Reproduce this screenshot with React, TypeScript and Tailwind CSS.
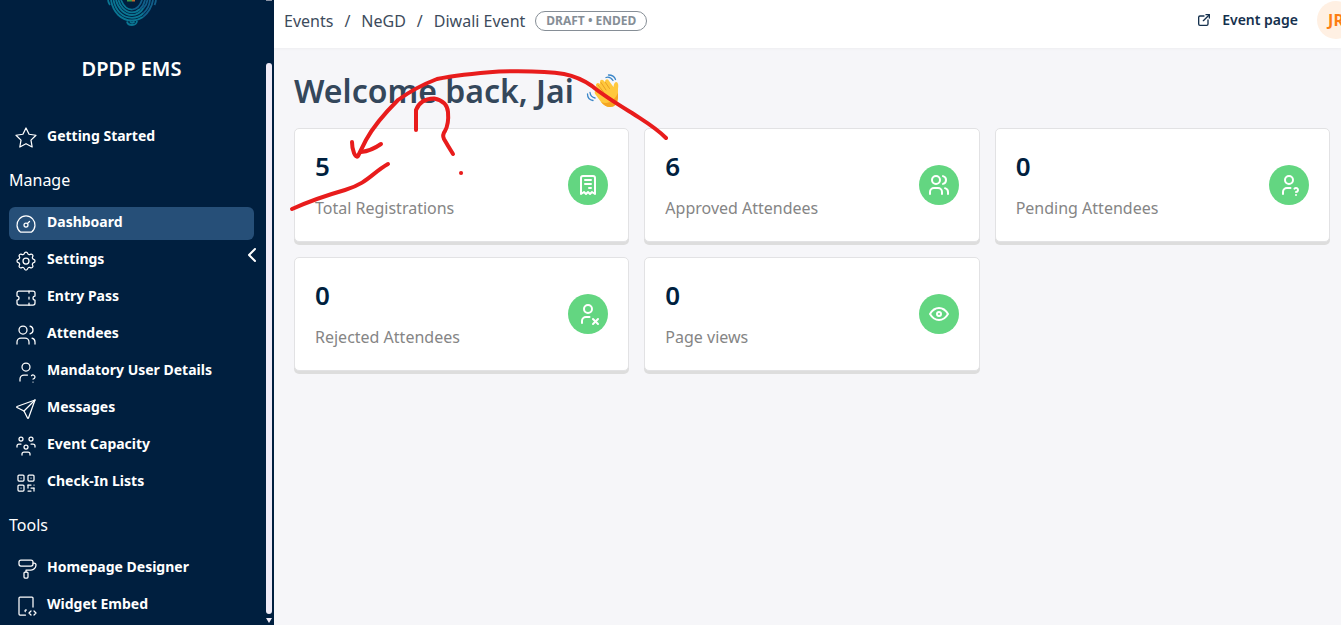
import React from 'react';
import type { IconType } from 'react-icons';
import {
    TbChevronLeft,
    TbDashboard,
    TbDeviceTabletCode,
    TbExternalLink,
    TbEye,
    TbPaint,
    TbQrcode,
    TbReceipt,
    TbSend,
    TbSettings,
    TbStar,
    TbTicket,
    TbUserQuestion,
    TbUsers,
    TbUsersGroup,
    TbUserX,
} from 'react-icons/tb';

interface NavItem {
    label: string;
    icon: IconType;
    active?: boolean;
}

interface Stat {
    value: number;
    label: string;
    icon: IconType;
}

const manageItems: NavItem[] = [
    { label: 'Dashboard', icon: TbDashboard, active: true },
    { label: 'Settings', icon: TbSettings },
    { label: 'Entry Pass', icon: TbTicket },
    { label: 'Attendees', icon: TbUsers },
    { label: 'Mandatory User Details', icon: TbUserQuestion },
    { label: 'Messages', icon: TbSend },
    { label: 'Event Capacity', icon: TbUsersGroup },
    { label: 'Check-In Lists', icon: TbQrcode },
];

const toolItems: NavItem[] = [
    { label: 'Homepage Designer', icon: TbPaint },
    { label: 'Widget Embed', icon: TbDeviceTabletCode },
];

const stats: Stat[] = [
    { value: 5, label: 'Total Registrations', icon: TbReceipt },
    { value: 6, label: 'Approved Attendees', icon: TbUsers },
    { value: 0, label: 'Pending Attendees', icon: TbUserQuestion },
    { value: 0, label: 'Rejected Attendees', icon: TbUserX },
    { value: 0, label: 'Page views', icon: TbEye },
];

function NavLink({ label, icon: Icon, active }: NavItem) {
    return (
        <a
            href="#"
            className={`flex h-[33px] items-center gap-[9px] rounded-md pl-[5px] pr-1 text-sm font-bold text-white ${active ? 'bg-[#264f78]' : ''}`}
        >
            <Icon size={24} strokeWidth={1.25} className="shrink-0" />
            <span className="pb-1 leading-5">{label}</span>
        </a>
    );
}

function NavHeading({ children }: { children: React.ReactNode }) {
    return <h2 className="flex h-[45px] items-center pb-0.5 text-base text-white">{children}</h2>;
}

function Logo() {
    return (
        <svg width="54" height="26" viewBox="0 0 54 26" fill="none" strokeWidth="1.8">
            <g stroke="#0a7693">
                <path d="M3 0Q3.500 3 5 5" />
                <path d="M6 0C8 12 16 20.500 27 20.500C31 20.500 35 19 38 17" />
                <path d="M8.500 0C10.500 10 17 17.800 27 17.800C32 17.800 36 15.500 38.500 13" />
                <path d="M11 0C13 8 19 15 27 15C32 15 36 12 38.500 8" />
                <path d="M13.500 0C15 6 20 12.300 27 12.300C30 12.300 33 11 35 9" />
                <path d="M16 0C18 5 22 9.600 27 9.600" />
                <path d="M22 21.500Q22.500 25 27 25Q31.500 25 32 21" />
                <path d="M25 21.500Q27 24 29.500 21.500" />
            </g>
            <g stroke="#115f8a">
                <path d="M51 0Q50.500 3 49.500 5" />
                <path d="M48 0C47 6 44 12 38 17" />
                <path d="M45 0C44.500 5 42 10 38.500 13" />
                <path d="M42.500 0C42 4 40.500 6 38.500 8" />
                <path d="M40 0Q38.500 6 35 9M37 0Q34 9 27 9.600" />
            </g>
            <path d="M22 0.500h5" stroke="#3f9b48" strokeWidth="2" />
            <path d="M27 0.500h3" stroke="#c06a2c" strokeWidth="2" />
        </svg>
    );
}

function Sidebar() {
    return (
        <aside className="relative flex w-[274px] shrink-0 bg-[#001f3f]">
            <div className="flex-1 overflow-hidden pl-[9px] pr-3">
                <div className="flex flex-col items-center">
                    <Logo />
                    <h1 className="mt-[29px] text-xl font-semibold leading-7 text-white">DPDP EMS</h1>
                </div>
                <nav className="mt-[38px] flex flex-col gap-1">
                    <NavLink label="Getting Started" icon={TbStar} />
                    <NavHeading>Manage</NavHeading>
                    {manageItems.map((item) => (
                        <NavLink key={item.label} {...item} />
                    ))}
                    <NavHeading>Tools</NavHeading>
                    {toolItems.map((item) => (
                        <NavLink key={item.label} {...item} />
                    ))}
                </nav>
            </div>
            {/* Scrollbar track, thumb and arrow */}
            <div className="mr-0.5 flex w-1.5 flex-col items-center pb-0.5">
                <div className="h-px w-full bg-[#8a93a5]" />
                <div className="mt-[62px] w-full flex-1 rounded-full bg-[#efebf7]" />
                <svg width="6" height="5" viewBox="0 0 6 5" className="mt-1">
                    <path d="M0 0h6L3 5z" fill="#efebf7" />
                </svg>
            </div>
            <button type="button" aria-label="Collapse sidebar" className="absolute right-2.5 top-[243px] text-white">
                <TbChevronLeft size={24} />
            </button>
        </aside>
    );
}

function TopBar() {
    return (
        <header className="flex h-12 items-center justify-between bg-white pl-2.5 shadow-[0_1px_3px_rgba(0,0,0,0.04)]">
            <div className="flex items-center gap-2.5 pb-1.5">
                <nav aria-label="Breadcrumb" className="flex gap-[11px] text-base text-[#3d4b5c]">
                    <a href="#">Events</a>
                    <span>/</span>
                    <a href="#">NeGD</a>
                    <span>/</span>
                    <a href="#">Diwali Event</a>
                </nav>
                <span className="flex h-5 items-center rounded-full border border-[#868e96] px-2.5 text-xs font-bold text-[#868e96]">
                    DRAFT • ENDED
                </span>
            </div>
            <div className="-mr-3.5 flex items-center gap-[19px] pb-2">
                <a href="#" className="flex items-center gap-2.5 text-sm font-semibold text-[#14304d]">
                    <TbExternalLink size={16} />
                    Event page
                </a>
                <button type="button" className="size-[38px] rounded-full bg-[#fff0e3] text-base font-bold text-[#fd7e14]">
                    JR
                </button>
            </div>
        </header>
    );
}

function StatCard({ value, label, icon: Icon }: Stat) {
    return (
        <div className="flex h-[114px] items-center justify-between rounded-[5px] border border-[#e2e2e4] bg-white px-5 shadow-[0_3px_0_#dddddd]">
            <div className="flex flex-col gap-3.5">
                <div className="text-[26px] font-semibold leading-8 text-[#001f3f]">{value}</div>
                <div className="text-base leading-6 text-[#858585]">{label}</div>
            </div>
            <div className="flex size-10 items-center justify-center rounded-full bg-[#63d681] text-white">
                <Icon size={24} />
            </div>
        </div>
    );
}

function WavingHand() {
    return (
        <svg width="34" height="34" viewBox="0 0 34 34" fill="none" strokeLinecap="round">
            <path
                d="M9.500 20.500Q7.500 17.500 10 16.500Q12 16.500 15 19L10.500 13Q9 10 11.500 9Q13 9 14 10L14 8Q14 5 17 6L19 8Q19 4.500 22 5.500L27.500 13Q28 8 30.500 8Q33 9 32 15L32 24Q31 33 24 33Q19 33 15 28Z"
                fill="#ffc83d"
            />
            <path d="M32 19L32 24Q31 33 24 33Q19 33 15 28Q26 32 32 19Z" fill="#f5a623" />
            <path d="M17.500 18L12 11M20 16L15 8.500M23.500 14.500L19.500 8.500" stroke="#e59a22" strokeWidth="0.9" />
            <path d="M20 3.500Q24 2 27 6.500M22.500 1Q28 1 29.500 5.500M4 18.500Q4.500 23 9 24M1.500 20Q1.500 25.500 7 26.500" stroke="#3a86c8" strokeWidth="1.3" />
        </svg>
    );
}

// Hand-drawn marks laid over the cards
function Annotations() {
    return (
        <svg
            className="pointer-events-none absolute left-0 top-0"
            width="400"
            height="230"
            viewBox="0 0 400 230"
            fill="none"
            stroke="#e81c1c"
            strokeWidth="4"
            strokeLinecap="round"
            strokeLinejoin="round"
        >
            <path d="M392 138C381 127 370 121 358 113C345 105 330 96 318 86C308 79 300 76 290 74C272 71 245 71 225 71.500C205 73 183 75 163 79C150 84 135 92 124 100C112 112 98 129 92 140L84 156Q82 158 80 153Q78 148 78 142" />
            <path d="M87 152Q97 151 107 144" />
            <path d="M142 130V110Q146 99 160 98.500Q173 101 174 112Q175 124 171 131Q168 135 170 139Q174 146 179 154" />
            <path d="M18 209C38 200 57 194 71 190C94 183 98 173 114 164" />
            <path d="M187 173h0.100" />
        </svg>
    );
}

export default function App() {
    return (
        <div className="flex min-h-screen overflow-hidden bg-[#f6f6f9] font-['Noto_Sans',sans-serif]">
            <Sidebar />
            <div className="relative min-w-0 flex-1">
                <TopBar />
                <main className="pl-5 pr-[11px] pt-5">
                    <div className="flex items-center gap-3">
                        <h1 className="text-[32px] font-semibold leading-[45px] text-[#34475b]">Welcome back, Jai</h1>
                        <WavingHand />
                    </div>
                    <div className="mt-[15px] grid grid-cols-3 gap-[15px]">
                        {stats.map((stat) => (
                            <StatCard key={stat.label} {...stat} />
                        ))}
                    </div>
                </main>
                <Annotations />
            </div>
        </div>
    );
}
